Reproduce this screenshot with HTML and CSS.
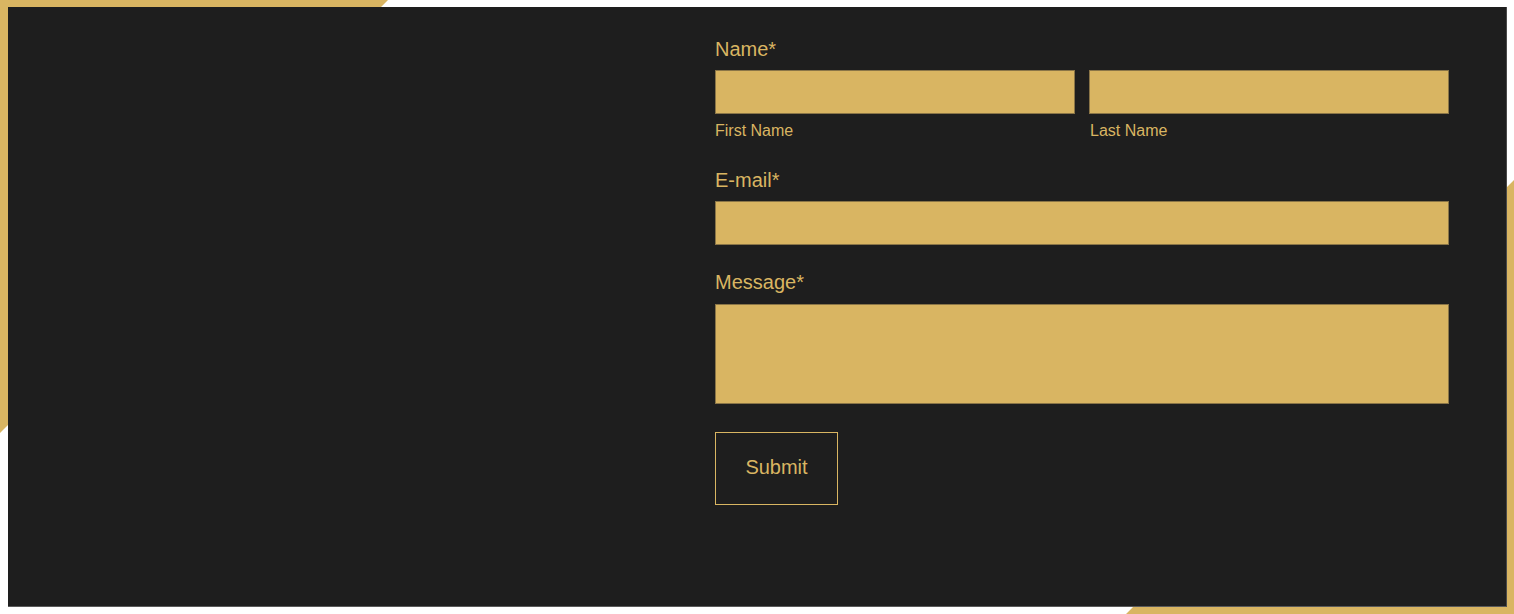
FILE: index.html
```html
<!DOCTYPE html>
<html lang="en">
<head>
    <meta charset="UTF-8">
    <meta name="viewport" content="width=device-width, initial-scale=1.0">
    <title>Contact</title>
    <link rel="stylesheet" href="styles.css">
</head>
<body>
    <div class="page">
        <!-- gold corner frames behind the panel -->
        <svg class="deco" width="1514" height="614" viewBox="0 0 1514 614" aria-hidden="true">
            <polygon points="0,0 388,0 381,7 8,7 8,425 0,433" fill="#d9b562"/>
            <polygon points="1514,180 1514,614 1126,614 1133,607 1507,607 1507,187" fill="#d9b562"/>
        </svg>

        <section class="panel">
            <div class="side"></div>
            <form class="contact" id="contact-form">
                <div class="field">
                    <label class="label" for="first-name">Name*</label>
                    <div class="name-row">
                        <div class="name-part">
                            <input type="text" id="first-name" required>
                            <span class="hint">First Name</span>
                        </div>
                        <div class="name-part">
                            <input type="text" id="last-name" required>
                            <span class="hint">Last Name</span>
                        </div>
                    </div>
                </div>
                <div class="field field-email">
                    <label class="label" for="email">E-mail*</label>
                    <input type="email" id="email" required>
                </div>
                <div class="field field-message">
                    <label class="label label-message" for="message">Message*</label>
                    <textarea id="message" required></textarea>
                </div>
                <button type="submit">Submit</button>
            </form>
        </section>
    </div>
</body>
</html>
```

FILE: styles.css
```css
body {
    margin: 0;
    background: #ffffff;
    font-family: "Liberation Sans", Arial, sans-serif;
    color: #d9b562;
}

.page {
    position: relative;
    width: 1514px;
    height: 614px;
    padding: 7px 7px 7px 8px;
    box-sizing: border-box;
}

.deco {
    position: absolute;
    top: 0;
    left: 0;
}

.panel {
    position: relative;
    height: 600px;
    background: #1e1e1e;
    display: grid;
    grid-template-columns: 1fr 734px;
    padding: 30px 57px 0 0;
    box-sizing: border-box;
    border-right: 1px solid #4a4a4a;
    border-bottom: 1px solid #5a5a5a;
}

.contact {
    display: flex;
    flex-direction: column;
}

.label {
    display: block;
    font-size: 20px;
    line-height: 24px;
    margin-bottom: 9px;
}

.label-message {
    margin-bottom: 10px;
}

.name-row {
    display: grid;
    grid-template-columns: 1fr 1fr;
    gap: 14px;
}

.hint {
    display: block;
    font-size: 16px;
    line-height: 20px;
    margin-top: 7px;
}

.name-part + .name-part .hint {
    padding-left: 1px;
}

.field-email {
    margin-top: 27px;
}

.field-message {
    margin-top: 25px;
}

input, textarea {
    display: block;
    width: 100%;
    height: 44px;
    margin: 0;
    padding: 0 10px;
    box-sizing: border-box;
    background: #d9b562;
    border: 1px solid #8a7547;
    font-family: inherit;
    font-size: 16px;
    color: #1e1e1e;
}

textarea {
    height: 100px;
    resize: none;
}

button {
    width: 123px;
    height: 73px;
    margin-top: 28px;
    padding: 0 0 2px;
    background: transparent;
    border: 1px solid #d9b562;
    color: #d9b562;
    font-family: inherit;
    font-size: 20px;
    cursor: pointer;
}
```
